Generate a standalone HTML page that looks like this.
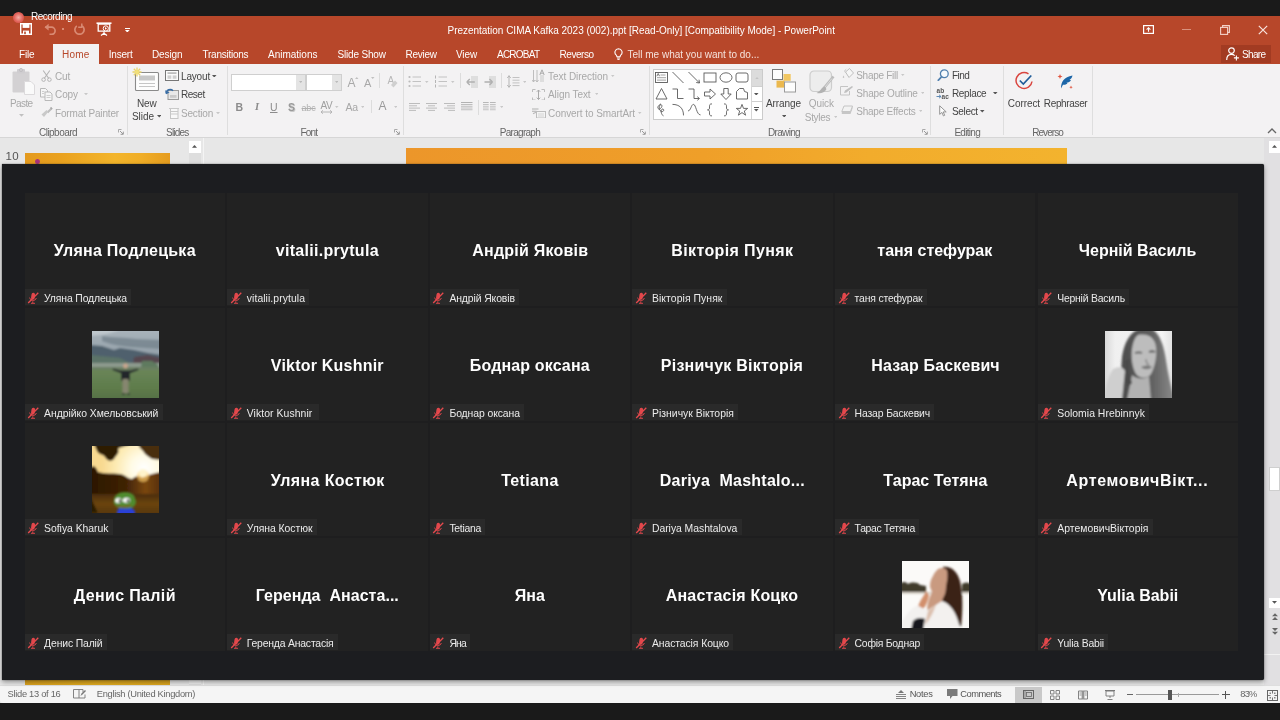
<!DOCTYPE html>
<html lang="uk"><head><meta charset="utf-8"><title>PowerPoint</title>
<style>
*{box-sizing:border-box;margin:0;padding:0}
html,body{width:1280px;height:720px;overflow:hidden;background:#1a1a1a;font-family:"Liberation Sans",sans-serif}
.abs,.tile,.big,.lab,.ph,.t{position:absolute}
#ppt{position:absolute;left:0;top:17px;width:1280px;height:686px;background:#e6e6e6}
#title{position:absolute;left:0;top:0;width:1280px;height:47px;background:#b7472a}
#ribbon{position:absolute;left:0;top:47px;width:1280px;height:74px;background:#f3f3f3;border-bottom:1px solid #d4d4d4}
#status{position:absolute;left:0;top:668px;width:1280px;height:18px;background:#f3f3f3}
.t{white-space:nowrap;line-height:1}
.big,.lab span,.t{will-change:opacity;opacity:.999}
.w{color:#fff}
#ov{position:absolute;left:2px;top:164px;width:1262px;height:516px;background:#1c1d20;border-radius:0 2px 2px 0;box-shadow:0 0 1px #0c0c0c,0 2px 5px rgba(0,0,0,.38)}
#gridbg{position:absolute;left:24.5px;top:193px;width:1213px;height:458px;background:#1e1e1f}
.tile{width:200.4px;height:113px;background:#222222;overflow:hidden}
.big{left:0;top:48.2px;height:20px;line-height:20px;color:#fff;font-weight:bold;font-size:16px;white-space:pre}
.lab{left:0;top:96px;height:16.6px;background:#2a2a2a;color:#ececec;font-size:10.4px;line-height:17px;padding:1.5px 0 0 19.6px;white-space:nowrap;overflow:hidden}
.mic{position:absolute;left:2.5px;top:3.5px;width:12px;height:12px}
.ph{left:67.1px;top:23.2px;width:67px;height:67px;overflow:hidden}
</style></head><body>
<svg width="0" height="0" style="position:absolute"><defs>
<g id="mic"><rect x="4.300" y="0.800" width="3.600" height="6.800" rx="1.800" fill="#e2474b" transform="rotate(8 6 4)"/><path d="M2.600 5.600a3.500 3.500 0 0 0 6.800 .400M5.800 9.300v1.700M4 11.300h4" stroke="#d8454a" stroke-width="1" fill="none"/><path d="M11.300 0.700L1.200 11" stroke="#e84a4e" stroke-width="1.300"/></g>
</defs></svg>
<div id="ppt">
<div class="abs" style="left:0px;top:-1px;width:1280px;height:48px;background:#b7472a;"></div>
<div class="abs" style="left:0px;top:47px;width:1280px;height:74px;background:#f3f2f3;"></div>
<div class="abs" style="left:0px;top:120px;width:1280px;height:1px;background:#d6d6d6;"></div>
<div class="abs" style="left:13px;top:-5px;width:11px;height:11px;border-radius:50%;background:radial-gradient(circle,#f4b0a8 0%,#e2645c 55%,#c9483f 100%)"></div>
<span class="t" style="left:31.0px;top:-5.3px;font-size:10px;color:#fff;letter-spacing:-0.51px;">Recording</span>
<svg class="abs" style="left:20px;top:6px;" width="12" height="12" viewBox="0 0 12 12"><path d="M0.7 0.7h10.6v10.6H0.7z" fill="none" stroke="#fff" stroke-width="1.4"/><rect x="2.6" y="0.7" width="6.8" height="4.2" fill="#fff"/><rect x="3" y="7.6" width="6" height="3.6" fill="#fff"/><rect x="4.2" y="8.6" width="1.6" height="2.6" fill="#b7472a"/></svg>
<svg class="abs" style="left:44px;top:6px;" width="13" height="12" viewBox="0 0 13 12"><path d="M1.2 4.2h6.3a3.6 3.6 0 0 1 0 7.2H5.5" fill="none" stroke="#d98a73" stroke-width="1.7"/><path d="M0.5 4.2L4.6 0.8v6.8z" fill="#d98a73"/></svg>
<div class="abs" style="left:62px;top:11px;width:2px;height:2px;background:#d98a73;"></div>
<svg class="abs" style="left:73px;top:6px;" width="13" height="12" viewBox="0 0 13 12"><path d="M3.800 2.900a4.600 4.600 0 1 0 5.400 0" fill="none" stroke="#d98a73" stroke-width="1.700"/><path d="M8.800 0.400v3.800h-3.600" fill="none" stroke="#d98a73" stroke-width="1.500"/></svg>
<svg class="abs" style="left:96px;top:5px;" width="16" height="14" viewBox="0 0 16 14"><path d="M0.5 1.2h15" stroke="#fff" stroke-width="1.6"/><path d="M2.2 2h11.6v7.2H2.2z" fill="none" stroke="#fff" stroke-width="1.3"/><path d="M8 9.2v2.2M5 13.4l3-2.2 3 2.2" fill="none" stroke="#fff" stroke-width="1.2"/><circle cx="9.8" cy="6.4" r="2.6" fill="#b7472a" stroke="#fff" stroke-width="1"/><path d="M9 5.1l2 1.3-2 1.3z" fill="#fff"/></svg>
<div class="abs" style="left:125px;top:10.5px;width:5px;height:1px;background:#fff;"></div>
<svg class="abs" style="left:125.20px;top:12.50px" width="4.6" height="2.60"><polygon points="0,0 4.6,0 2.3,2.5999999999999996" fill="#fff"/></svg>
<span class="t" style="left:447.5px;top:8.8px;font-size:10px;color:#fff;letter-spacing:-0.02px;">Prezentation CIMA Kafka 2023 (002).ppt [Read-Only] [Compatibility Mode] - PowerPoint</span>
<svg class="abs" style="left:1143px;top:8px;" width="11" height="9" viewBox="0 0 11 9"><rect x="0.6" y="0.6" width="9.8" height="7.8" fill="none" stroke="#fff" stroke-width="1.2"/><path d="M5.5 6.8V3M3.6 4.6l1.9-1.9 1.9 1.9" fill="none" stroke="#fff" stroke-width="1.1"/></svg>
<div class="abs" style="left:1182px;top:12px;width:9px;height:1px;background:#d9927e;"></div>
<svg class="abs" style="left:1220px;top:8px;" width="10" height="10" viewBox="0 0 10 10"><rect x="0.6" y="2.4" width="7" height="7" fill="none" stroke="#f3d2c8" stroke-width="1.1"/><path d="M2.6 2.4V0.6h6.8v6.8H7.6" fill="none" stroke="#f3d2c8" stroke-width="1.1"/></svg>
<svg class="abs" style="left:1258px;top:8px;" width="10" height="10" viewBox="0 0 10 10"><path d="M0.8 0.8l8.4 8.4M9.2 0.8L0.8 9.2" stroke="#f8e4de" stroke-width="1.2"/></svg>
<div class="abs" style="left:53px;top:27px;width:46px;height:20px;background:#f3f2f3;"></div>
<span class="t" style="left:19.0px;top:32.5px;font-size:10px;color:#fff;letter-spacing:-0.15px;">File</span>
<span class="t" style="left:62.0px;top:32.5px;font-size:10px;color:#b7472a;letter-spacing:0.21px;">Home</span>
<span class="t" style="left:108.8px;top:32.5px;font-size:10px;color:#fff;letter-spacing:-0.21px;">Insert</span>
<span class="t" style="left:152.0px;top:32.5px;font-size:10px;color:#fff;letter-spacing:-0.10px;">Design</span>
<span class="t" style="left:202.5px;top:32.5px;font-size:10px;color:#fff;letter-spacing:-0.25px;">Transitions</span>
<span class="t" style="left:268.0px;top:32.5px;font-size:10px;color:#fff;">Animations</span>
<span class="t" style="left:337.5px;top:32.5px;font-size:10px;color:#fff;letter-spacing:-0.18px;">Slide Show</span>
<span class="t" style="left:405.5px;top:32.5px;font-size:10px;color:#fff;letter-spacing:-0.26px;">Review</span>
<span class="t" style="left:456.0px;top:32.5px;font-size:10px;color:#fff;letter-spacing:-0.12px;">View</span>
<span class="t" style="left:497.0px;top:32.5px;font-size:10px;color:#fff;letter-spacing:-0.76px;">ACROBAT</span>
<span class="t" style="left:559.5px;top:32.5px;font-size:10px;color:#fff;letter-spacing:-0.43px;">Reverso</span>
<svg class="abs" style="left:614px;top:31px;" width="9" height="12" viewBox="0 0 9 12"><path d="M4.5 0.7a3.6 3.6 0 0 1 2.2 6.4c-.5.5-.6.9-.6 1.6H2.9c0-.7-.1-1.1-.6-1.6A3.6 3.6 0 0 1 4.5.7z" fill="none" stroke="#fff" stroke-width="1.1"/><path d="M3 10h3M3.4 11.4h2.2" stroke="#fff" stroke-width="1"/></svg>
<span class="t" style="left:627.5px;top:32.5px;font-size:10px;color:#f6e3dd;">Tell me what you want to do...</span>
<div class="abs" style="left:1221px;top:28px;width:50px;height:18px;background:#a23b22;"></div>
<svg class="abs" style="left:1226px;top:30px;" width="13" height="14" viewBox="0 0 13 14"><circle cx="5.5" cy="3.6" r="2.8" fill="none" stroke="#fff" stroke-width="1.2"/><path d="M0.7 13c0-3.6 2-5.6 4.8-5.6 1.4 0 2.4.4 3.2 1.200" fill="none" stroke="#fff" stroke-width="1.2"/><path d="M10.400 8.400v5M7.900 10.900h5" stroke="#fff" stroke-width="1.1"/></svg>
<span class="t" style="left:1242.0px;top:33.0px;font-size:10px;color:#fff;letter-spacing:-0.64px;">Share</span>
<svg class="abs" style="left:12px;top:51px;" width="24" height="28" viewBox="0 0 24 28"><rect x="0.5" y="3.5" width="17" height="21" rx="1" fill="#d3d1d3"/><rect x="5" y="1" width="8" height="4.5" rx="1" fill="#cfcdd0"/><circle cx="9" cy="2" r="1.6" fill="none" stroke="#c2c0c3" stroke-width="1"/><path d="M12.500 13.5h6.500l3.500 3.500v9.500h-10z" fill="#fafafa" stroke="#dcdadc" stroke-width="1"/></svg>
<span class="t" style="left:10.0px;top:81.5px;font-size:10px;color:#a9a9a9;letter-spacing:-0.61px;">Paste</span>
<svg class="abs" style="left:18.50px;top:96.90px" width="5" height="2.80"><polygon points="0,0 5,0 2.5,2.8" fill="#c0c0c0"/></svg>
<svg class="abs" style="left:41px;top:53px;" width="11" height="12" viewBox="0 0 11 12"><path d="M2.200 0.500l5.600 8M8.800 0.500L3.200 8.500" stroke="#b5b5b5" stroke-width="1.1" fill="none"/><circle cx="2.600" cy="9.600" r="1.800" fill="none" stroke="#b5b5b5" stroke-width="1"/><circle cx="8.400" cy="9.600" r="1.800" fill="none" stroke="#b5b5b5" stroke-width="1"/></svg>
<span class="t" style="left:55.0px;top:54.5px;font-size:10px;color:#a9a9a9;letter-spacing:-0.19px;">Cut</span>
<svg class="abs" style="left:40px;top:71px;" width="13" height="13" viewBox="0 0 13 13"><path d="M0.500 0.500h5l2 2v6.500h-7z" fill="#f6f6f6" stroke="#b9b9b9" stroke-width="1"/><path d="M5 4h5l2 2v6.500h-7z" fill="#f6f6f6" stroke="#b9b9b9" stroke-width="1"/><path d="M6.500 7.500h4M6.500 9.500h4M2 3.500h2.500M2 5.500h2" stroke="#c4c4c4" stroke-width="0.800"/></svg>
<span class="t" style="left:55.0px;top:73.2px;font-size:10px;color:#a9a9a9;letter-spacing:-0.09px;">Copy</span>
<svg class="abs" style="left:84.00px;top:75.65px" width="4" height="2.30"><polygon points="0,0 4,0 2.0,2.3" fill="#c8c8c8"/></svg>
<svg class="abs" style="left:41px;top:90px;" width="12" height="11" viewBox="0 0 12 11"><path d="M11 1L6.500 5.500" stroke="#bdbdbd" stroke-width="2"/><path d="M7.500 4.500l-2-1.500-5 4.500 2.500 2.500z" fill="#c9c9c9"/><path d="M9.500 0.500l1.500 1.500" stroke="#aaa" stroke-width="1.600"/></svg>
<span class="t" style="left:55.0px;top:91.5px;font-size:10px;color:#a9a9a9;letter-spacing:-0.15px;">Format Painter</span>
<span class="t" style="left:39.0px;top:110.5px;font-size:10px;color:#666;letter-spacing:-0.53px;">Clipboard</span>
<svg class="abs" style="left:118px;top:112px;" width="6" height="6" viewBox="0 0 6 6"><path d="M0.500 3.500V0.500h3" fill="none" stroke="#aaa" stroke-width="1"/><path d="M2 2l3 3M5.300 2.600v2.700H2.600" fill="none" stroke="#999" stroke-width="1"/></svg>
<div class="abs" style="left:127px;top:49px;width:1px;height:69px;background:#dedede;"></div>
<svg class="abs" style="left:132px;top:50px;" width="28" height="25" viewBox="0 0 28 25"><rect x="3.500" y="5.500" width="23" height="18" rx="1" fill="#fdfdfd" stroke="#8a8a8a" stroke-width="1.100"/><rect x="7" y="8.500" width="16" height="5" fill="#c8c8c8"/><path d="M7 16.500h16M7 19.500h16" stroke="#c6c6c6" stroke-width="1"/><path d="M5 0.500v9M0.500 5h9M1.800 1.800l6.400 6.400M8.200 1.800L1.800 8.200" stroke="#e9d46a" stroke-width="1.300"/><circle cx="5" cy="5" r="2" fill="#f1e07a"/></svg>
<span class="t" style="left:137.0px;top:81.5px;font-size:10px;color:#444;letter-spacing:-0.17px;">New</span>
<span class="t" style="left:132.0px;top:94.5px;font-size:10px;color:#444;letter-spacing:-0.05px;">Slide</span>
<svg class="abs" style="left:156.50px;top:98.02px" width="4.5" height="2.55"><polygon points="0,0 4.5,0 2.25,2.55" fill="#555"/></svg>
<svg class="abs" style="left:165px;top:53px;" width="14" height="11" viewBox="0 0 14 11"><rect x="0.500" y="0.500" width="13" height="10" fill="#fbfbfb" stroke="#777" stroke-width="1"/><rect x="2.500" y="2.200" width="9" height="1.800" fill="#bdbdbd"/><rect x="2.500" y="5.400" width="3.800" height="3.400" fill="#cfcfcf"/><rect x="7.700" y="5.400" width="3.800" height="3.400" fill="#cfcfcf"/></svg>
<span class="t" style="left:181.0px;top:54.5px;font-size:10px;color:#444;letter-spacing:-0.17px;">Layout</span>
<svg class="abs" style="left:212.35px;top:57.52px" width="4.5" height="2.55"><polygon points="0,0 4.5,0 2.25,2.55" fill="#555"/></svg>
<svg class="abs" style="left:165px;top:71px;" width="14" height="12" viewBox="0 0 14 12"><rect x="3" y="2.500" width="10.500" height="9" fill="#e8e8e8" stroke="#9a9a9a" stroke-width="1"/><rect x="5" y="7" width="6.500" height="2.800" fill="#c9c9c9"/><path d="M1.200 5.500a4 4 0 0 1 6.800-2.800" fill="none" stroke="#3a6ea5" stroke-width="1.600"/><path d="M0 2.200l1.200 4 3.400-1.800z" fill="#3a6ea5"/></svg>
<span class="t" style="left:181.0px;top:72.9px;font-size:10px;color:#444;letter-spacing:-0.47px;">Reset</span>
<svg class="abs" style="left:169px;top:90px;" width="10" height="12" viewBox="0 0 10 12"><rect x="1.500" y="1.500" width="7.500" height="10" fill="#f8f8f8" stroke="#c6c6c6" stroke-width="1"/><path d="M0 1.500h10M1.500 4.500h7.500M1.500 7h7.500" stroke="#c9c9c9" stroke-width="1"/></svg>
<span class="t" style="left:181.0px;top:92.0px;font-size:10px;color:#a9a9a9;letter-spacing:-0.19px;">Section</span>
<svg class="abs" style="left:215.50px;top:95.15px" width="4" height="2.30"><polygon points="0,0 4,0 2.0,2.3" fill="#c8c8c8"/></svg>
<span class="t" style="left:166.0px;top:110.5px;font-size:10px;color:#666;letter-spacing:-0.79px;">Slides</span>
<div class="abs" style="left:227px;top:49px;width:1px;height:69px;background:#dedede;"></div>
<div class="abs" style="left:231px;top:56.5px;width:75px;height:17.5px;background:#fff;border:1px solid #cfcfcf"></div>
<div class="abs" style="left:295.5px;top:57.5px;width:9.5px;height:15.5px;background:#e4e4e4;"></div>
<svg class="abs" style="left:298.75px;top:64.28px" width="3.5" height="2.05"><polygon points="0,0 3.5,0 1.75,2.05" fill="#bcbcbc"/></svg>
<div class="abs" style="left:306px;top:56.5px;width:35.5px;height:17.5px;background:#fff;border:1px solid #cfcfcf"></div>
<div class="abs" style="left:332px;top:57.5px;width:8.5px;height:15.5px;background:#e4e4e4;"></div>
<svg class="abs" style="left:334.75px;top:64.28px" width="3.5" height="2.05"><polygon points="0,0 3.5,0 1.75,2.05" fill="#bcbcbc"/></svg>
<span class="t" style="left:347.5px;top:59.6px;font-size:12px;color:#a9a9a9;">A</span>
<svg class="abs" style="left:355.25px;top:59.77px" width="3.5" height="2.05"><polygon points="0,2.05 3.5,2.05 1.75,0" fill="#c0c0c0"/></svg>
<span class="t" style="left:364.0px;top:60.5px;font-size:11px;color:#a9a9a9;letter-spacing:0.16px;">A</span>
<svg class="abs" style="left:371.25px;top:60.27px" width="3.5" height="2.05"><polygon points="0,0 3.5,0 1.75,2.05" fill="#c0c0c0"/></svg>
<div class="abs" style="left:379px;top:56px;width:1px;height:15px;background:#dcdcdc;"></div>
<span class="t" style="left:387.5px;top:59.0px;font-size:10px;color:#b8b8b8;letter-spacing:-0.17px;">A</span>
<svg class="abs" style="left:390px;top:63px;" width="8" height="8" viewBox="0 0 8 8"><path d="M1 5l4-4.500 2.500 2.500-4 4.500z" fill="#cfcfcf"/></svg>
<span class="t" style="left:235.6px;top:85.3px;font-size:10.5px;color:#8c8c8c;letter-spacing:-1.18px;font-weight:bold;">B</span>
<span class="t" style="left:255.0px;top:85.3px;font-size:10.5px;color:#8c8c8c;letter-spacing:1.08px;font-style:italic;font-family:'Liberation Serif',serif;font-weight:bold;">I</span>
<span class="t" style="left:270.0px;top:85.3px;font-size:10.5px;color:#8c8c8c;letter-spacing:-0.08px;text-decoration:underline;">U</span>
<span class="t" style="left:288.0px;top:85.3px;font-size:10.5px;color:#9a9a9a;letter-spacing:0.50px;font-weight:bold;text-shadow:0.700px 0.700px 0 #c9c9c9;">S</span>
<span class="t" style="left:301.5px;top:86.5px;font-size:9px;color:#b0b0b0;letter-spacing:-0.14px;text-decoration:line-through;">abc</span>
<span class="t" style="left:320.6px;top:84.0px;font-size:10px;color:#a0a0a0;letter-spacing:-0.60px;">AV</span>
<svg class="abs" style="left:320px;top:93px;" width="13" height="4" viewBox="0 0 13 4"><path d="M1 2h11M1 2l2-1.700M1 2l2 1.700M12 2l-2-1.700M12 2l-2 1.700" stroke="#b0b0b0" stroke-width="0.900" fill="none"/></svg>
<svg class="abs" style="left:335.25px;top:88.77px" width="3.5" height="2.05"><polygon points="0,0 3.5,0 1.75,2.05" fill="#c8c8c8"/></svg>
<span class="t" style="left:345.6px;top:85.3px;font-size:10.5px;color:#a8a8a8;letter-spacing:-0.47px;">Aa</span>
<svg class="abs" style="left:360.75px;top:88.77px" width="3.5" height="2.05"><polygon points="0,0 3.5,0 1.75,2.05" fill="#c8c8c8"/></svg>
<div class="abs" style="left:371px;top:83px;width:1px;height:13px;background:#dcdcdc;"></div>
<span class="t" style="left:378.5px;top:83.1px;font-size:12px;color:#9a9a9a;">A</span>
<svg class="abs" style="left:393.65px;top:88.77px" width="3.5" height="2.05"><polygon points="0,0 3.5,0 1.75,2.05" fill="#c8c8c8"/></svg>
<span class="t" style="left:300.6px;top:110.5px;font-size:10px;color:#666;letter-spacing:-0.84px;">Font</span>
<svg class="abs" style="left:394px;top:112px;" width="6" height="6" viewBox="0 0 6 6"><path d="M0.500 3.500V0.500h3" fill="none" stroke="#aaa" stroke-width="1"/><path d="M2 2l3 3M5.300 2.600v2.700H2.600" fill="none" stroke="#999" stroke-width="1"/></svg>
<div class="abs" style="left:403px;top:49px;width:1px;height:69px;background:#dedede;"></div>
<svg class="abs" style="left:408px;top:58px;" width="14" height="13" viewBox="0 0 14 13"><circle cx="1.500" cy="2" r="1.100" fill="#bbb"/><circle cx="1.500" cy="6.500" r="1.100" fill="#bbb"/><circle cx="1.500" cy="11" r="1.100" fill="#bbb"/><path d="M4.500 2h8.500M4.500 6.500h8.500M4.500 11h8.500" stroke="#c2c2c2" stroke-width="1"/></svg>
<svg class="abs" style="left:425.25px;top:63.77px" width="3.5" height="2.05"><polygon points="0,0 3.5,0 1.75,2.05" fill="#c8c8c8"/></svg>
<svg class="abs" style="left:434px;top:58px;" width="14" height="13" viewBox="0 0 14 13"><path d="M1.500 0.500v3M1.500 5v3M1.500 9.500v3" stroke="#b5b5b5" stroke-width="1"/><path d="M4.500 2h8.500M4.500 6.500h8.500M4.500 11h8.500" stroke="#c2c2c2" stroke-width="1"/></svg>
<svg class="abs" style="left:451.25px;top:63.77px" width="3.5" height="2.05"><polygon points="0,0 3.5,0 1.75,2.05" fill="#c8c8c8"/></svg>
<div class="abs" style="left:460px;top:56px;width:1px;height:15px;background:#dcdcdc;"></div>
<svg class="abs" style="left:466px;top:59px;" width="12" height="12" viewBox="0 0 12 12"><rect x="5" y="0" width="7" height="12" fill="#dedede"/><path d="M0.800 6h8M0.800 6l3-3M0.800 6l3 3" stroke="#b0b0b0" stroke-width="1.400" fill="none"/></svg>
<svg class="abs" style="left:484px;top:59px;" width="12" height="12" viewBox="0 0 12 12"><rect x="5" y="0" width="7" height="12" fill="#dedede"/><path d="M0.500 6h8M8.500 6l-3-3M8.500 6l-3 3" stroke="#b0b0b0" stroke-width="1.400" fill="none"/></svg>
<div class="abs" style="left:501px;top:56px;width:1px;height:15px;background:#dcdcdc;"></div>
<svg class="abs" style="left:507px;top:58px;" width="13" height="13" viewBox="0 0 13 13"><path d="M2 0.500v12M0.300 3L2 0.800 3.700 3M0.300 10L2 12.200 3.700 10" stroke="#b5b5b5" stroke-width="1" fill="none"/><path d="M5.500 2.500h7M5.500 5.200h7M5.500 7.900h7M5.500 10.600h7" stroke="#c2c2c2" stroke-width="1"/></svg>
<svg class="abs" style="left:522.65px;top:63.77px" width="3.5" height="2.05"><polygon points="0,0 3.5,0 1.75,2.05" fill="#c8c8c8"/></svg>
<svg class="abs" style="left:409px;top:85.5px;" width="12" height="8" viewBox="0 0 12 8"><path d="M0 0.5h11" stroke="#bcbcbc" stroke-width="1"/><path d="M0 2.8h8" stroke="#bcbcbc" stroke-width="1"/><path d="M0 5.1h11" stroke="#bcbcbc" stroke-width="1"/><path d="M0 7.4h7" stroke="#bcbcbc" stroke-width="1"/></svg>
<svg class="abs" style="left:426px;top:85.5px;" width="12" height="8" viewBox="0 0 12 8"><path d="M0 0.5h11" stroke="#bcbcbc" stroke-width="1"/><path d="M2 2.8h7" stroke="#bcbcbc" stroke-width="1"/><path d="M0 5.1h11" stroke="#bcbcbc" stroke-width="1"/><path d="M2 7.4h7" stroke="#bcbcbc" stroke-width="1"/></svg>
<svg class="abs" style="left:443.5px;top:85.5px;" width="12" height="8" viewBox="0 0 12 8"><path d="M0 0.5h11" stroke="#bcbcbc" stroke-width="1"/><path d="M3 2.8h8" stroke="#bcbcbc" stroke-width="1"/><path d="M0 5.1h11" stroke="#bcbcbc" stroke-width="1"/><path d="M4 7.4h7" stroke="#bcbcbc" stroke-width="1"/></svg>
<svg class="abs" style="left:461px;top:84.5px;" width="11.5" height="9.5" viewBox="0 0 11.5 9.5"><path d="M0 0.5h11.500" stroke="#b2b2b2" stroke-width="1"/><path d="M0 2.7h11.500" stroke="#b2b2b2" stroke-width="1"/><path d="M0 4.9h11.500" stroke="#b2b2b2" stroke-width="1"/><path d="M0 7.1h11.500" stroke="#b2b2b2" stroke-width="1"/><path d="M0 9.3h11.500" stroke="#b2b2b2" stroke-width="1"/></svg>
<div class="abs" style="left:478px;top:83px;width:1px;height:15px;background:#dcdcdc;"></div>
<svg class="abs" style="left:483px;top:84.5px;" width="13" height="9.5" viewBox="0 0 13 9.5"><path d="M0 0.5h5.700M7 0.5h5.700" stroke="#b8b8b8" stroke-width="1"/><path d="M0 2.7h5.700M7 2.7h5.700" stroke="#b8b8b8" stroke-width="1"/><path d="M0 4.9h5.700M7 4.9h5.700" stroke="#b8b8b8" stroke-width="1"/><path d="M0 7.1h5.700M7 7.1h5.700" stroke="#b8b8b8" stroke-width="1"/><path d="M0 9.3h5.700M7 9.3h5.700" stroke="#b8b8b8" stroke-width="1"/></svg>
<svg class="abs" style="left:499.55px;top:88.77px" width="3.5" height="2.05"><polygon points="0,0 3.5,0 1.75,2.05" fill="#c8c8c8"/></svg>
<svg class="abs" style="left:532px;top:51.5px;" width="13" height="14" viewBox="0 0 13 14"><path d="M1.500 1v12M0 11l1.500 2 1.500-2M5 1v12M3.500 11l1.500 2 1.500-2" stroke="#b8b8b8" stroke-width="0.900" fill="none"/><path d="M11 6v7M9 6v7" stroke="#c4c4c4" stroke-width="0.900"/><path d="M7.800 6L10 0.800 12.200 6M8.600 4.200h2.800" stroke="#aaa" stroke-width="1" fill="none"/></svg>
<span class="t" style="left:548.0px;top:54.5px;font-size:10px;color:#a9a9a9;letter-spacing:-0.04px;">Text Direction</span>
<svg class="abs" style="left:611.25px;top:57.77px" width="3.5" height="2.05"><polygon points="0,0 3.5,0 1.75,2.05" fill="#c8c8c8"/></svg>
<svg class="abs" style="left:532px;top:71.5px;" width="13" height="11.5" viewBox="0 0 13 11.5"><path d="M0.500 3V0.500h3M9.500 0.500h3V3M12.500 8.500V11h-3M3.500 11h-3V8.500" fill="none" stroke="#bdbdbd" stroke-width="1"/><path d="M6.500 1v9.500M4.800 2.800L6.500 1l1.700 1.800M4.800 8.700l1.700 1.800 1.700-1.800" fill="none" stroke="#aaa" stroke-width="1"/></svg>
<span class="t" style="left:548.0px;top:72.9px;font-size:10px;color:#a9a9a9;letter-spacing:-0.06px;">Align Text</span>
<svg class="abs" style="left:594.50px;top:75.77px" width="3.5" height="2.05"><polygon points="0,0 3.5,0 1.75,2.05" fill="#c8c8c8"/></svg>
<svg class="abs" style="left:531.5px;top:90.5px;" width="14" height="10.5" viewBox="0 0 14 10.5"><path d="M0 1h6.500M0 3.200h4.500" stroke="#b0b0b0" stroke-width="1.100"/><path d="M1 5.800l3-1.500" stroke="#b8b8b8" stroke-width="1.200"/><rect x="4.500" y="3.500" width="9" height="6.500" fill="#f4f4f4" stroke="#bdbdbd" stroke-width="1"/><path d="M6 6h6M6 8h6" stroke="#cdcdcd" stroke-width="0.800"/></svg>
<span class="t" style="left:548.0px;top:91.5px;font-size:10px;color:#a9a9a9;letter-spacing:-0.07px;">Convert to SmartArt</span>
<svg class="abs" style="left:638.25px;top:94.77px" width="3.5" height="2.05"><polygon points="0,0 3.5,0 1.75,2.05" fill="#c8c8c8"/></svg>
<span class="t" style="left:499.8px;top:110.5px;font-size:10px;color:#666;letter-spacing:-0.72px;">Paragraph</span>
<svg class="abs" style="left:640px;top:112px;" width="6" height="6" viewBox="0 0 6 6"><path d="M0.500 3.500V0.500h3" fill="none" stroke="#aaa" stroke-width="1"/><path d="M2 2l3 3M5.300 2.600v2.700H2.600" fill="none" stroke="#999" stroke-width="1"/></svg>
<div class="abs" style="left:649px;top:49px;width:1px;height:69px;background:#dedede;"></div>
<div class="abs" style="left:653px;top:51.5px;width:110px;height:51px;background:#fff;border:1px solid #cbcbcb"></div>
<div class="abs" style="left:751px;top:52.5px;width:11px;height:16px;background:#dcdcdc;"></div>
<div class="abs" style="left:751px;top:68.5px;width:11px;height:1px;background:#cfcfcf;"></div>
<div class="abs" style="left:751px;top:83.5px;width:11px;height:1px;background:#cfcfcf;"></div>
<div class="abs" style="left:750.5px;top:52.5px;width:1px;height:49px;background:#d6d6d6;"></div>
<svg class="abs" style="left:754.50px;top:59.65px" width="4" height="2.30"><polygon points="0,2.3 4,2.3 2.0,0" fill="#c4c4c4"/></svg>
<svg class="abs" style="left:754.25px;top:75.52px" width="4.5" height="2.55"><polygon points="0,0 4.5,0 2.25,2.55" fill="#555"/></svg>
<div class="abs" style="left:754.2px;top:89.5px;width:4.6px;height:1px;background:#555;"></div>
<svg class="abs" style="left:754.25px;top:92.02px" width="4.5" height="2.55"><polygon points="0,0 4.5,0 2.25,2.55" fill="#555"/></svg>
<svg class="abs" style="left:653px;top:51.5px;" width="100" height="51" viewBox="0 0 100 51"><rect x="2.5" y="3.5" width="12" height="10" stroke="#5a5a5a" stroke-width="0.900" fill="none"/><path d="M7.5 6.0h5M4.0 8.7h9M4.0 11.1h9" stroke="#8a8a8a" stroke-width="0.800"/><path d="M3.9000000000000004 7.2l1.300-2.700 1.300 2.700" stroke="#555" stroke-width="0.800" fill="none"/><path d="M19.5 3.0l11 11" stroke="#5a5a5a" stroke-width="0.900" fill="none"/><path d="M35.5 3.0l11 11M46.5 14.0l-0.500-3.300M46.5 14.0l-3.300-0.500" stroke="#5a5a5a" stroke-width="0.900" fill="none"/><rect x="51" y="4.0" width="12" height="9" stroke="#5a5a5a" stroke-width="0.900" fill="none"/><ellipse cx="73" cy="8.5" rx="6" ry="4.700" stroke="#5a5a5a" stroke-width="0.900" fill="none"/><rect x="83" y="4.0" width="12" height="9" rx="2" stroke="#5a5a5a" stroke-width="0.900" fill="none"/><path d="M8.5 19.5l5.500 10.500h-11z" stroke="#5a5a5a" stroke-width="0.900" fill="none"/><path d="M19.5 20.0h5v9.500h6" stroke="#5a5a5a" stroke-width="0.900" fill="none"/><path d="M35.5 20.0h5.500v9.500h5M46.5 29.5l-2.200-1.800M46.5 29.5l-2.200 1.800" stroke="#5a5a5a" stroke-width="0.900" fill="none"/><path d="M51.5 23.0h5.500v-3l5.500 5-5.500 5v-3h-5.500z" stroke="#5a5a5a" stroke-width="0.900" fill="none"/><path d="M70.8 19.5h4.400v5.500h3l-5.200 5.500-5.200-5.500h3z" stroke="#5a5a5a" stroke-width="0.900" fill="none"/><path d="M83.5 30.0V22.5L86.5 19.5H90.5A4 4 0 0 0 94.5 23.5V30.0z" stroke="#5a5a5a" stroke-width="0.900" fill="none"/><path d="M8.0 34.900000000000006c-3 1.500-4 4-2.500 5s4.500-2.500 3-4-3.500 3-1.500 5.500 4.500.500 3.500-1-3.500 1-2 4 1.500 2 2 2.500" stroke="#5a5a5a" stroke-width="0.900" fill="none"/><path d="M19.5 35.400000000000006c7 0 11 4 11 11" stroke="#5a5a5a" stroke-width="0.900" fill="none"/><path d="M35 41.900000000000006c3 0 3-6.500 5.500-6.500s3 10.500 7 10.500" stroke="#5a5a5a" stroke-width="0.900" fill="none"/><path d="M59 34.900000000000006c-2.500 0-2.500 1-2.500 3s0 3-2 3c2 0 2 1 2 3s0 3 2.500 3" stroke="#5a5a5a" stroke-width="0.900" fill="none"/><path d="M71 34.900000000000006c2.500 0 2.500 1 2.500 3s0 3 2 3c-2 0-2 1-2 3s0 3-2.500 3" stroke="#5a5a5a" stroke-width="0.900" fill="none"/><path d="M89 35.400000000000006l1.500 4h4.200l-3.400 2.600 1.300 4.200-3.600-2.600-3.600 2.600 1.300-4.200-3.400-2.600h4.200z" stroke="#5a5a5a" stroke-width="0.900" fill="none"/></svg>
<svg class="abs" style="left:772px;top:52px;" width="24" height="24" viewBox="0 0 24 24"><rect x="11.500" y="5" width="7.200" height="6.800" fill="#f1c661"/><rect x="4.500" y="11.600" width="8" height="7" fill="#ebb84e"/><rect x="0.500" y="0.500" width="10" height="10" fill="#fdfdfd" stroke="#7a7a7a" stroke-width="1"/><rect x="12.500" y="13" width="11" height="10" fill="#fdfdfd" stroke="#9a9a9a" stroke-width="1"/></svg>
<span class="t" style="left:766.0px;top:82.0px;font-size:10px;color:#444;letter-spacing:-0.08px;">Arrange</span>
<svg class="abs" style="left:781.50px;top:97.52px" width="4.5" height="2.55"><polygon points="0,0 4.5,0 2.25,2.55" fill="#555"/></svg>
<svg class="abs" style="left:809px;top:53px;" width="26" height="25" viewBox="0 0 26 25"><rect x="1" y="1" width="21.500" height="20.500" rx="4" fill="#ededed" stroke="#cdcdcd" stroke-width="1.200"/><path d="M24.500 6.500L15 18" stroke="#bcbcbc" stroke-width="2.600"/><path d="M23 8.500l-7 8.500" stroke="#e2e2e2" stroke-width="0.800"/><path d="M15.500 16.500c-3 .500-3 4-8 6.500 4 1 8 0 10-4z" fill="#b2b2b2"/></svg>
<span class="t" style="left:808.8px;top:82.0px;font-size:10px;color:#a9a9a9;letter-spacing:-0.11px;">Quick</span>
<span class="t" style="left:804.8px;top:95.5px;font-size:10px;color:#a9a9a9;letter-spacing:-0.33px;">Styles</span>
<svg class="abs" style="left:833.75px;top:98.77px" width="3.5" height="2.05"><polygon points="0,0 3.5,0 1.75,2.05" fill="#c8c8c8"/></svg>
<svg class="abs" style="left:842px;top:50.5px;" width="12" height="12" viewBox="0 0 12 12"><path d="M3.500 4l4-3.500 4 4.500-4.500 4.500z" fill="#f6f6f6" stroke="#bdbdbd" stroke-width="1"/><path d="M4.200 1.200c-1.500 1-1.700 2-1 3" fill="none" stroke="#bdbdbd" stroke-width="0.900"/><path d="M1.500 7.500c-1 1.500-1 2.500 0 2.500s1-1 0-2.500z" fill="#c4c4c4"/></svg>
<span class="t" style="left:856.2px;top:53.8px;font-size:10px;color:#a9a9a9;letter-spacing:-0.27px;">Shape Fill</span>
<svg class="abs" style="left:901.25px;top:57.27px" width="3.5" height="2.05"><polygon points="0,0 3.5,0 1.75,2.05" fill="#c8c8c8"/></svg>
<svg class="abs" style="left:840px;top:69px;" width="14" height="10" viewBox="0 0 14 10"><path d="M8 0.500H0.500v8.500h9V5" fill="none" stroke="#c4c4c4" stroke-width="1"/><path d="M4 7l1-2.500L12 0l1 1-6.500 5.500z" fill="#c0c0c0"/></svg>
<span class="t" style="left:856.2px;top:72.0px;font-size:10px;color:#a9a9a9;letter-spacing:-0.14px;">Shape Outline</span>
<svg class="abs" style="left:920.75px;top:75.27px" width="3.5" height="2.05"><polygon points="0,0 3.5,0 1.75,2.05" fill="#c8c8c8"/></svg>
<svg class="abs" style="left:841px;top:88px;" width="13" height="10" viewBox="0 0 13 10"><path d="M3 1h8.500l-2 5.500H0.800z" fill="#f2f2f2" stroke="#c4c4c4" stroke-width="1"/><path d="M0.800 6.500h8.700l2-5.500v2.500l-2 5.500H0.800z" fill="#c6c6c6"/></svg>
<span class="t" style="left:856.2px;top:89.8px;font-size:10px;color:#a9a9a9;letter-spacing:-0.21px;">Shape Effects</span>
<svg class="abs" style="left:918.75px;top:93.27px" width="3.5" height="2.05"><polygon points="0,0 3.5,0 1.75,2.05" fill="#c8c8c8"/></svg>
<span class="t" style="left:768.0px;top:110.5px;font-size:10px;color:#666;letter-spacing:-0.67px;">Drawing</span>
<svg class="abs" style="left:922px;top:112px;" width="6" height="6" viewBox="0 0 6 6"><path d="M0.500 3.500V0.500h3" fill="none" stroke="#aaa" stroke-width="1"/><path d="M2 2l3 3M5.300 2.600v2.700H2.600" fill="none" stroke="#999" stroke-width="1"/></svg>
<div class="abs" style="left:930px;top:49px;width:1px;height:69px;background:#dedede;"></div>
<svg class="abs" style="left:937px;top:51.5px;" width="12" height="12.5" viewBox="0 0 12 12.5"><circle cx="7.300" cy="4.800" r="3.900" fill="#f6fafd" stroke="#4f7fae" stroke-width="1.300"/><path d="M4.500 7.800L0.800 11.800" stroke="#4f7fae" stroke-width="1.700"/></svg>
<span class="t" style="left:952.0px;top:53.5px;font-size:10px;color:#444;letter-spacing:-0.51px;">Find</span>
<span class="t" style="left:936.5px;top:70.6px;font-size:6.5px;color:#555;letter-spacing:0.21px;font-weight:bold;">ab</span>
<span class="t" style="left:941.5px;top:76.6px;font-size:6.5px;color:#555;letter-spacing:0.14px;font-weight:bold;">ac</span>
<svg class="abs" style="left:936px;top:77px;" width="6" height="5" viewBox="0 0 6 5"><path d="M0.500 2.500h4.500M5 2.500L3 0.800M5 2.500L3 4.200" stroke="#4f7fae" stroke-width="0.900" fill="none"/></svg>
<span class="t" style="left:952.0px;top:71.5px;font-size:10px;color:#444;letter-spacing:-0.35px;">Replace</span>
<svg class="abs" style="left:993.00px;top:74.52px" width="4.5" height="2.55"><polygon points="0,0 4.5,0 2.25,2.55" fill="#555"/></svg>
<svg class="abs" style="left:939px;top:88px;" width="8" height="11.5" viewBox="0 0 8 11.5"><path d="M0.700 0.800v8.600l2.200-2 1.500 3.500 1.300-.600-1.500-3.400h3z" fill="#fcfcfc" stroke="#8a8a8a" stroke-width="0.900"/></svg>
<span class="t" style="left:952.0px;top:89.8px;font-size:10px;color:#444;letter-spacing:-0.34px;">Select</span>
<svg class="abs" style="left:980.25px;top:93.02px" width="4.5" height="2.55"><polygon points="0,0 4.5,0 2.25,2.55" fill="#555"/></svg>
<span class="t" style="left:954.4px;top:110.5px;font-size:10px;color:#666;letter-spacing:-0.71px;">Editing</span>
<div class="abs" style="left:1003px;top:49px;width:1px;height:69px;background:#dedede;"></div>
<svg class="abs" style="left:1014px;top:54px;" width="20" height="20" viewBox="0 0 20 20"><path d="M14.500 2.800A8 8 0 1 0 18 10.500" fill="none" stroke="#d9463f" stroke-width="1.500"/><path d="M5.800 9.500l3.500 3.500 8-8.500" fill="none" stroke="#1f5c99" stroke-width="1.700"/></svg>
<span class="t" style="left:1007.8px;top:82.0px;font-size:10px;color:#444;letter-spacing:-0.08px;">Correct</span>
<svg class="abs" style="left:1057px;top:55.5px;" width="18" height="17" viewBox="0 0 18 17"><path d="M4 15.500c0-7 3-11.500 11.500-13-0.500 2.500-1.500 3.500-3 4.200l1.500.300c-1 1.800-2.500 2.600-4.500 2.800l1 .700c-1.500 1.200-3 1.400-4.500 1.200z" fill="#1b66a8"/><path d="M3 1l.700 1.800 1.800.700-1.800.700L3 6l-.700-1.800L.500 3.500l1.800-.700z" fill="#e0553f"/><path d="M14 12.500l.500 1.200 1.200.500-1.200.500-.500 1.200-.500-1.200-1.200-.500 1.200-.500z" fill="#e0553f"/></svg>
<span class="t" style="left:1043.8px;top:82.0px;font-size:10px;color:#444;letter-spacing:-0.35px;">Rephraser</span>
<span class="t" style="left:1032.2px;top:110.5px;font-size:10px;color:#666;letter-spacing:-0.93px;">Reverso</span>
<div class="abs" style="left:1092px;top:49px;width:1px;height:69px;background:#dedede;"></div>
<svg class="abs" style="left:1266.5px;top:111px;" width="10" height="6" viewBox="0 0 10 6"><path d="M1 5l4-4 4 4" fill="none" stroke="#666" stroke-width="1.300"/></svg>
<div class="abs" style="left:0px;top:121px;width:1280px;height:548px;background:#e7e7e7;"></div>
<span class="t" style="left:5.6px;top:133.6px;font-size:11.5px;color:#555;letter-spacing:0.18px;">10</span>
<div class="abs" style="left:25px;top:135.5px;width:145px;height:12px;background:linear-gradient(90deg,#e49a1e 0%,#eaa21f 25%,#f3b52b 62%,#f0ae27 80%,#e59c1f 100%);"></div>
<div class="abs" style="left:35px;top:141.5px;width:5px;height:5.5px;background:#a8337c;border-radius:50%"></div>
<div class="abs" style="left:25px;top:663px;width:145px;height:5.5px;background:linear-gradient(90deg,#d9a11e 0%,#e0ab20 50%,#dba51f 100%);"></div>
<div class="abs" style="left:188.5px;top:123.5px;width:12px;height:546px;background:#dedede;"></div>
<div class="abs" style="left:188.5px;top:123.5px;width:12px;height:12px;background:#fff;"></div>
<svg class="abs" style="left:192.00px;top:127.90px" width="5" height="2.80"><polygon points="0,2.8 5,2.8 2.5,0" fill="#555"/></svg>
<div class="abs" style="left:203px;top:121px;width:1px;height:548px;background:#f4f4f4;"></div>
<div class="abs" style="left:188.5px;top:663px;width:12px;height:4px;background:#f0f0f0;"></div>
<div class="abs" style="left:406px;top:131px;width:661px;height:17px;background:linear-gradient(90deg,#ec962a 0%,#ef9f29 45%,#f2ac2c 70%,#f3b32e 100%);"></div>
<div class="abs" style="left:1264px;top:121px;width:16px;height:548px;background:#e1e0e2;"></div>
<div class="abs" style="left:1268.5px;top:124px;width:11.5px;height:11.5px;background:#fff;"></div>
<svg class="abs" style="left:1272.00px;top:127.90px" width="5" height="2.80"><polygon points="0,2.8 5,2.8 2.5,0" fill="#555"/></svg>
<div class="abs" style="left:1268.5px;top:449.5px;width:11.5px;height:24.5px;background:#fff;border:1px solid #cfcfcf"></div>
<div class="abs" style="left:1268.5px;top:580.5px;width:11.5px;height:10.5px;background:#fff;"></div>
<svg class="abs" style="left:1272.00px;top:584.40px" width="5" height="2.80"><polygon points="0,0 5,0 2.5,2.8" fill="#555"/></svg>
<svg class="abs" style="left:1271.5px;top:596px;" width="6" height="7" viewBox="0 0 6 7"><path d="M0 3.300l3-3 3 3zM0 7l3-3 3 3z" fill="#666"/></svg>
<svg class="abs" style="left:1271.5px;top:610.5px;" width="6" height="7" viewBox="0 0 6 7"><path d="M0 0l3 3 3-3zM0 3.700l3 3 3-3z" fill="#666"/></svg>
<div class="abs" style="left:1264px;top:637px;width:16px;height:1px;background:#f2f2f2;"></div>
<div class="abs" style="left:0px;top:668px;width:1280px;height:18.2px;background:#f5f5f5;border-radius:0 0 0 3px"></div>
<div class="abs" style="left:0px;top:668px;width:1280px;height:1px;background:#dedede;"></div>
<span class="t" style="left:7.5px;top:673.3px;font-size:9.3px;color:#666;letter-spacing:-0.28px;">Slide 13 of 16</span>
<svg class="abs" style="left:73px;top:672px;" width="13" height="10" viewBox="0 0 13 10"><path d="M0.500 0.500h5.500v8.500h-5.500zM6 0.500h4v3M6 9h6v-3.500" fill="none" stroke="#777" stroke-width="0.900"/><path d="M7.500 7l1-2.500L12 1l1 1-3.500 3.500z" fill="#777"/></svg>
<span class="t" style="left:96.8px;top:673.3px;font-size:9.3px;color:#666;letter-spacing:-0.30px;">English (United Kingdom)</span>
<svg class="abs" style="left:896px;top:673px;" width="10" height="9" viewBox="0 0 10 9"><path d="M5 0l3 3h-6z" fill="#777"/><path d="M0 4.500h10M0 6.500h10M0 8.500h10" stroke="#777" stroke-width="0.900"/></svg>
<span class="t" style="left:909.7px;top:673.2px;font-size:9.3px;color:#555;letter-spacing:-0.30px;">Notes</span>
<svg class="abs" style="left:946.5px;top:672px;" width="11" height="11" viewBox="0 0 11 11"><path d="M0 0h10.500v7h-5l-2.500 3v-3h-3z" fill="#7a7a7a"/></svg>
<span class="t" style="left:960.3px;top:673.2px;font-size:9.3px;color:#555;letter-spacing:-0.50px;">Comments</span>
<div class="abs" style="left:1015px;top:669.5px;width:27px;height:16.5px;background:#c9c9c9;"></div>
<svg class="abs" style="left:1023px;top:673px;" width="11" height="9" viewBox="0 0 11 9"><rect x="0.500" y="0.500" width="10" height="8" fill="none" stroke="#666" stroke-width="1"/><rect x="3.500" y="2.500" width="5" height="4" fill="none" stroke="#666" stroke-width="0.800"/><path d="M2 0.500v8" stroke="#666" stroke-width="0.700"/></svg>
<svg class="abs" style="left:1050px;top:672.5px;" width="10" height="10" viewBox="0 0 10 10"><path d="M0.500 0.500h3.500v3.500h-3.500zM6 0.500h3.500v3.500h-3.500zM0.500 6h3.500v3.500h-3.500zM6 6h3.500v3.500h-3.500z" fill="none" stroke="#777" stroke-width="0.900"/></svg>
<svg class="abs" style="left:1077.5px;top:672.5px;" width="10" height="10" viewBox="0 0 10 10"><path d="M0.500 1h3.700v8h-3.700zM5.800 1h3.700v8h-3.700z" fill="none" stroke="#777" stroke-width="0.900"/><path d="M5 0v10M1.500 3h2M1.500 5h2M6.800 3h2M6.800 5h2" stroke="#777" stroke-width="0.700"/></svg>
<svg class="abs" style="left:1105px;top:672.5px;" width="10" height="10" viewBox="0 0 10 10"><path d="M0 0.500h10" stroke="#777" stroke-width="1.100"/><path d="M1 1h8v5h-8z" fill="none" stroke="#777" stroke-width="0.900"/><path d="M5 6v2M2.500 9.500h5" stroke="#777" stroke-width="0.900"/></svg>
<div class="abs" style="left:1127px;top:677px;width:6px;height:1.3px;background:#666;"></div>
<div class="abs" style="left:1136px;top:677.3px;width:83px;height:0.8px;background:#9a9a9a;"></div>
<div class="abs" style="left:1177.5px;top:675.5px;width:0.8px;height:4px;background:#aaa;"></div>
<div class="abs" style="left:1168px;top:672.5px;width:3.5px;height:10px;background:#555;"></div>
<div class="abs" style="left:1222px;top:677px;width:7.5px;height:1.4px;background:#555;"></div>
<div class="abs" style="left:1225px;top:674px;width:1.4px;height:7.5px;background:#555;"></div>
<span class="t" style="left:1240.3px;top:673.3px;font-size:9.3px;color:#666;letter-spacing:-0.80px;">83%</span>
<svg class="abs" style="left:1267px;top:672.5px;" width="11" height="11" viewBox="0 0 11 11"><rect x="0.500" y="0.500" width="10" height="10" fill="none" stroke="#666" stroke-width="1"/><path d="M5.500 0.500v3M5.500 7.500v3M0.500 5.500h3M7.500 5.500h3" stroke="#666" stroke-width="0.900"/><path d="M2.500 2.500h1.500v1.500h-1.500zM7 2.500h1.500v1.500h-1.500zM2.500 7h1.500v1.500h-1.500zM7 7h1.500v1.500h-1.500z" fill="#888"/></svg>
</div>
<div id="ov"></div><div id="gridbg"></div>
<div class="tile" style="left:24.5px;top:192.7px"><div class="big" style="left:29.3px;letter-spacing:0.26px">Уляна Подлецька</div><div class="lab" style="width:106.7px"><svg class="mic" viewBox="0 0 12 12"><use href="#mic"/></svg><span style="letter-spacing:-0.13px">Уляна Подлецька</span></div></div>
<div class="tile" style="left:227.2px;top:192.7px"><div class="big" style="left:48.6px;letter-spacing:0.29px">vitalii.prytula</div><div class="lab" style="width:82.0px"><svg class="mic" viewBox="0 0 12 12"><use href="#mic"/></svg><span style="letter-spacing:0.07px">vitalii.prytula</span></div></div>
<div class="tile" style="left:429.8px;top:192.7px"><div class="big" style="left:42.5px;letter-spacing:0.23px">Андрій Яковів</div><div class="lab" style="width:89.4px"><svg class="mic" viewBox="0 0 12 12"><use href="#mic"/></svg><span style="letter-spacing:-0.10px">Андрій Яковів</span></div></div>
<div class="tile" style="left:632.4px;top:192.7px"><div class="big" style="left:38.9px;letter-spacing:0.37px">Вікторія Пуняк</div><div class="lab" style="width:94.3px"><svg class="mic" viewBox="0 0 12 12"><use href="#mic"/></svg><span style="letter-spacing:0.07px">Вікторія Пуняк</span></div></div>
<div class="tile" style="left:835px;top:192.7px"><div class="big" style="left:42.3px;letter-spacing:0.00px">таня стефурак</div><div class="lab" style="width:91.7px"><svg class="mic" viewBox="0 0 12 12"><use href="#mic"/></svg><span style="letter-spacing:-0.16px">таня стефурак</span></div></div>
<div class="tile" style="left:1037.6px;top:192.7px"><div class="big" style="left:41.2px;letter-spacing:0.00px">Черній Василь</div><div class="lab" style="width:91.6px"><svg class="mic" viewBox="0 0 12 12"><use href="#mic"/></svg><span style="letter-spacing:-0.21px">Черній Василь</span></div></div>
<div class="tile" style="left:24.5px;top:307.7px"><svg class="ph" viewBox="0 0 67 67"><defs><linearGradient id="p1s" x1="0" y1="0" x2="0" y2="1"><stop offset="0" stop-color="#aab4bb"/><stop offset="0.5" stop-color="#8b99a3"/><stop offset="1" stop-color="#9aa7ae"/></linearGradient><linearGradient id="p1g" x1="0" y1="0" x2="0" y2="1"><stop offset="0" stop-color="#6b8659"/><stop offset="0.600" stop-color="#5f7d4c"/><stop offset="1" stop-color="#566f45"/></linearGradient><filter id="bl1"><feGaussianBlur stdDeviation="0.9"/></filter></defs>
<g filter="url(#bl1)"><rect x="-2" y="-2" width="71" height="71" fill="url(#p1s)"/><path d="M10 5c10 2 22 1 34 3l25 1v9l-30-2c-12-1-22-3-29-6z" fill="#6f7d88" opacity=".700"/><path d="M-2 -2h30c-6 4-16 6-30 7z" fill="#c4ccd1" opacity=".800"/><path d="M-2 14l12 1 12 4 6-2 14 2 14 3 13 2v20H-2z" fill="#4f616d"/><path d="M42 26l14-2 13 3v12H40z" fill="#57474f"/><path d="M-2 24l30 3 12 6 29 3v8H-2z" fill="#5b7368"/><rect x="-2" y="32" width="71" height="6" fill="#8d9a8e"/><path d="M50 30h10l6 4v8H48z" fill="#5e7a5f"/><rect x="-2" y="37" width="71" height="32" fill="url(#p1g)"/><path d="M-2 36h71v3H-2z" fill="#6a7f62"/><path d="M21 37.500l8 2h9l8-2 .5 1.500-8.500 3.200v7.800h-9v-7.800l-8.500-3.200z" fill="#23262c"/><rect x="30.500" y="48" width="6" height="14" fill="#86866f"/><circle cx="33.500" cy="35" r="2.400" fill="#c9a58e"/><path d="M30 62h3v2h-3zM35 62h3v2h-3z" fill="#3c4a3a"/></g></svg><div class="lab" style="width:138.2px"><svg class="mic" viewBox="0 0 12 12"><use href="#mic"/></svg><span style="letter-spacing:-0.03px">Андрійко Хмельовський</span></div></div>
<div class="tile" style="left:227.2px;top:307.7px"><div class="big" style="left:43.6px;letter-spacing:0.22px">Viktor Kushnir</div><div class="lab" style="width:91.5px"><svg class="mic" viewBox="0 0 12 12"><use href="#mic"/></svg><span style="letter-spacing:0.08px">Viktor Kushnir</span></div></div>
<div class="tile" style="left:429.8px;top:307.7px"><div class="big" style="left:40.0px;letter-spacing:0.14px">Боднар оксана</div><div class="lab" style="width:94.4px"><svg class="mic" viewBox="0 0 12 12"><use href="#mic"/></svg><span style="letter-spacing:-0.08px">Боднар оксана</span></div></div>
<div class="tile" style="left:632.4px;top:307.7px"><div class="big" style="left:28.4px;letter-spacing:0.25px">Різничук Вікторія</div><div class="lab" style="width:105.8px"><svg class="mic" viewBox="0 0 12 12"><use href="#mic"/></svg><span style="letter-spacing:0.02px">Різничук Вікторія</span></div></div>
<div class="tile" style="left:835px;top:307.7px"><div class="big" style="left:36.3px;letter-spacing:0.13px">Назар Баскевич</div><div class="lab" style="width:99.2px"><svg class="mic" viewBox="0 0 12 12"><use href="#mic"/></svg><span style="letter-spacing:-0.14px">Назар Баскевич</span></div></div>
<div class="tile" style="left:1037.6px;top:307.7px"><svg class="ph" viewBox="0 0 67 67"><defs><linearGradient id="p2b" x1="0" y1="0" x2="1" y2="0"><stop offset="0" stop-color="#d9d9d9"/><stop offset="0.150" stop-color="#f0f0f0"/><stop offset="0.850" stop-color="#f4f4f4"/><stop offset="1" stop-color="#e2e2e2"/></linearGradient><linearGradient id="p2h" x1="0" y1="0" x2="1" y2="0"><stop offset="0" stop-color="#4c4c4c"/><stop offset="0.550" stop-color="#5e5e5e"/><stop offset="1" stop-color="#8c8c8c"/></linearGradient><filter id="bl2"><feGaussianBlur stdDeviation="1.300"/></filter></defs>
<rect width="67" height="67" fill="url(#p2b)"/><g filter="url(#bl2)"><path d="M34 -2c-9 3-15 14-17 28-1 14-2 30-1 43h54c-4-12-7-26-9-40-2-14-6-26-14-31z" fill="url(#p2h)"/><path d="M8 38c6-3 10-2 12 2l-3 29H-2c2-12 5-24 10-31z" fill="#cfcfcf"/><path d="M33 4c9-2 17 2 18 12 1 9-1 20-5 27-4 5-11 5-15 0-4-7-5-17-4-25 1-7 3-12 6-14z" fill="#bdbdbd"/><path d="M27 44c4 4 12 5 17 1l2 24H22z" fill="#b2b2b2"/><path d="M30 22c3-1 5-1 7 0M44 21c2-1 4-1 6 0" stroke="#555" stroke-width="1.800" fill="none"/><path d="M41 28c0 3 1 5 3 6" stroke="#888" stroke-width="1.500" fill="none"/><path d="M36 36c4-2 8-2 11 0-3 3-8 3-11 0z" fill="#777"/><path d="M20 30c0 10 0 20 3 26l4-4c-3-8-3-16-2-24z" fill="#4a4a4a"/></g></svg><div class="lab" style="width:111.6px"><svg class="mic" viewBox="0 0 12 12"><use href="#mic"/></svg><span style="letter-spacing:0.03px">Solomia Hrebinnyk</span></div></div>
<div class="tile" style="left:24.5px;top:422.7px"><svg class="ph" viewBox="0 0 67 67"><defs><radialGradient id="p3s" cx="0.760" cy="0.340" r="0.600"><stop offset="0" stop-color="#ffffff"/><stop offset="0.300" stop-color="#fffbe6"/><stop offset="0.650" stop-color="#fdebb4"/><stop offset="1" stop-color="#f8d990"/></radialGradient><linearGradient id="p3t" x1="0" y1="0" x2="1" y2="0"><stop offset="0" stop-color="#2b1705"/><stop offset="0.500" stop-color="#3f2206"/><stop offset="0.780" stop-color="#7a470c"/><stop offset="1" stop-color="#56300a"/></linearGradient><linearGradient id="p3g" x1="0" y1="0" x2="0" y2="1"><stop offset="0" stop-color="#4a2c08"/><stop offset="0.450" stop-color="#6b4510"/><stop offset="1" stop-color="#553509"/></linearGradient><filter id="bl3"><feGaussianBlur stdDeviation="0.900"/></filter></defs>
<g filter="url(#bl3)"><rect x="-2" y="-2" width="71" height="71" fill="url(#p3s)"/><path d="M2 -2h36c-4 3-9 2-12 5 2 4-2 6-4 10-3 3-7 2-9-2-2-3-6-2-8-6z" fill="#2e1c06"/><path d="M46 -2h23v16c-3 0-6-1-9-1-3-2-7-4-9-8-2-2-4-4-5-7z" fill="#4a2e0a"/><path d="M-2 22c3-3 6-2 8 4 6 2 14 1 22 2 6 1 8 5 12 5 3-3 7-4 10-1 6-3 12-5 19-6v26H-2z" fill="url(#p3t)"/><circle cx="51" cy="30" r="6" fill="#ffd070" opacity=".650"/><circle cx="51" cy="27" r="4" fill="#fff6d0" opacity=".900"/><rect x="-2" y="48" width="71" height="21" fill="url(#p3g)"/><path d="M-2 50l8 17h-8z" fill="#2c1a06"/></g>
<g filter="url(#bl3)"><path d="M25 66c0-3 3-5 8-5s10 2 10 5v3H25z" fill="#2c40d8"/><path d="M22 54c0-5 5-8 11-8s10 3 10 7c2 2 1 6-2 8-4 2-12 2-16 0-3-2-4-5-3-7z" fill="#4f8c2d"/><ellipse cx="26.500" cy="54.500" rx="3.400" ry="2.500" fill="#fff"/><ellipse cx="34.500" cy="54.200" rx="3.600" ry="2.500" fill="#fff"/><circle cx="28" cy="55" r="1.400" fill="#111"/><circle cx="36" cy="54.800" r="1.400" fill="#111"/><path d="M25 59.500c4 1.500 10 1.500 14-.5" stroke="#8a4a2a" stroke-width="1.200" fill="none"/></g></svg><div class="lab" style="width:88.2px"><svg class="mic" viewBox="0 0 12 12"><use href="#mic"/></svg><span style="letter-spacing:-0.03px">Sofiya Kharuk</span></div></div>
<div class="tile" style="left:227.2px;top:422.7px"><div class="big" style="left:43.6px;letter-spacing:0.40px">Уляна Костюк</div><div class="lab" style="width:89.5px"><svg class="mic" viewBox="0 0 12 12"><use href="#mic"/></svg><span style="letter-spacing:-0.04px">Уляна Костюк</span></div></div>
<div class="tile" style="left:429.8px;top:422.7px"><div class="big" style="left:71.5px;letter-spacing:0.38px">Tetiana</div><div class="lab" style="width:55.4px"><svg class="mic" viewBox="0 0 12 12"><use href="#mic"/></svg><span style="letter-spacing:-0.28px">Tetiana</span></div></div>
<div class="tile" style="left:632.4px;top:422.7px"><div class="big" style="left:27.4px;letter-spacing:0.24px">Dariya&nbsp; Mashtalo...</div><div class="lab" style="width:109.3px"><svg class="mic" viewBox="0 0 12 12"><use href="#mic"/></svg><span style="letter-spacing:-0.04px">Dariya Mashtalova</span></div></div>
<div class="tile" style="left:835px;top:422.7px"><div class="big" style="left:48.3px;letter-spacing:0.03px">Тарас Тетяна</div><div class="lab" style="width:84.2px"><svg class="mic" viewBox="0 0 12 12"><use href="#mic"/></svg><span style="letter-spacing:-0.34px">Тарас Тетяна</span></div></div>
<div class="tile" style="left:1037.6px;top:422.7px"><div class="big" style="left:28.7px;letter-spacing:0.64px">АртемовичВікт...</div><div class="lab" style="width:115.1px"><svg class="mic" viewBox="0 0 12 12"><use href="#mic"/></svg><span style="letter-spacing:0.04px">АртемовичВікторія</span></div></div>
<div class="tile" style="left:24.5px;top:537.7px"><div class="big" style="left:49.3px;letter-spacing:0.35px">Денис Палій</div><div class="lab" style="width:82.2px"><svg class="mic" viewBox="0 0 12 12"><use href="#mic"/></svg><span style="letter-spacing:-0.14px">Денис Палій</span></div></div>
<div class="tile" style="left:227.2px;top:537.7px"><div class="big" style="left:28.6px;letter-spacing:0.03px">Геренда&nbsp; Анаста...</div><div class="lab" style="width:110.5px"><svg class="mic" viewBox="0 0 12 12"><use href="#mic"/></svg><span style="letter-spacing:-0.19px">Геренда Анастасія</span></div></div>
<div class="tile" style="left:429.8px;top:537.7px"><div class="big" style="left:85.0px;letter-spacing:-0.02px">Яна</div><div class="lab" style="width:40.4px"><svg class="mic" viewBox="0 0 12 12"><use href="#mic"/></svg><span style="letter-spacing:-0.81px">Яна</span></div></div>
<div class="tile" style="left:632.4px;top:537.7px"><div class="big" style="left:33.4px;letter-spacing:0.18px">Анастасія Коцко</div><div class="lab" style="width:100.8px"><svg class="mic" viewBox="0 0 12 12"><use href="#mic"/></svg><span style="letter-spacing:-0.09px">Анастасія Коцко</span></div></div>
<div class="tile" style="left:835px;top:537.7px"><svg class="ph" viewBox="0 0 67 67"><defs><filter id="bl4"><feGaussianBlur stdDeviation="1"/></filter></defs>
<rect width="67" height="67" fill="#fbfaf8"/><g filter="url(#bl4)"><path d="M-2 23c3-3 6-2 8 0 4-2 9-2 12 1l6 1v6H-2z" fill="#3f3a2c"/><path d="M60 23c3-2 6-2 9 0v9h-9z" fill="#3f3a2c"/><rect x="-2" y="31" width="71" height="2" fill="#d8d2c8"/><path d="M41 6c8-1 14 4 17 14 3 12 3 30 1 46l-10-10c-5-8-10-14-12-22 0-8 1-20 4-28z" fill="#3b2319"/><path d="M36 8c4-2 8-1 9 2 1 5 0 10-1 15 0 5-1 9-3 12l-3 10-12 6c-2-6 0-14 4-22-1-3-2-4-2-6 0-4 1-7 3-10 1-3 3-5 5-7z" fill="#c99a80"/><path d="M24 30c-2 5-5 8-7 13-2 4-1 7 2 7 4-3 7-9 8-16z" fill="#d28f6c"/><path d="M12 46c3-2 6-1 8 1l6 2 14-9c8 3 14 10 18 27H-2c2-8 7-16 14-21z" fill="#f3f1ef"/><path d="M26 50l8-6c-3 8-6 14-11 20z" fill="#dcc0ae"/><path d="M11 60c3-3 8-4 12-2l-2 11H9z" fill="#17171a"/></g></svg><div class="lab" style="width:89.2px"><svg class="mic" viewBox="0 0 12 12"><use href="#mic"/></svg><span style="letter-spacing:-0.25px">Софія Боднар</span></div></div>
<div class="tile" style="left:1037.6px;top:537.7px"><div class="big" style="left:59.7px;letter-spacing:0.01px">Yulia Babii</div><div class="lab" style="width:70.6px"><svg class="mic" viewBox="0 0 12 12"><use href="#mic"/></svg><span style="letter-spacing:-0.16px">Yulia Babii</span></div></div>
</body></html>
